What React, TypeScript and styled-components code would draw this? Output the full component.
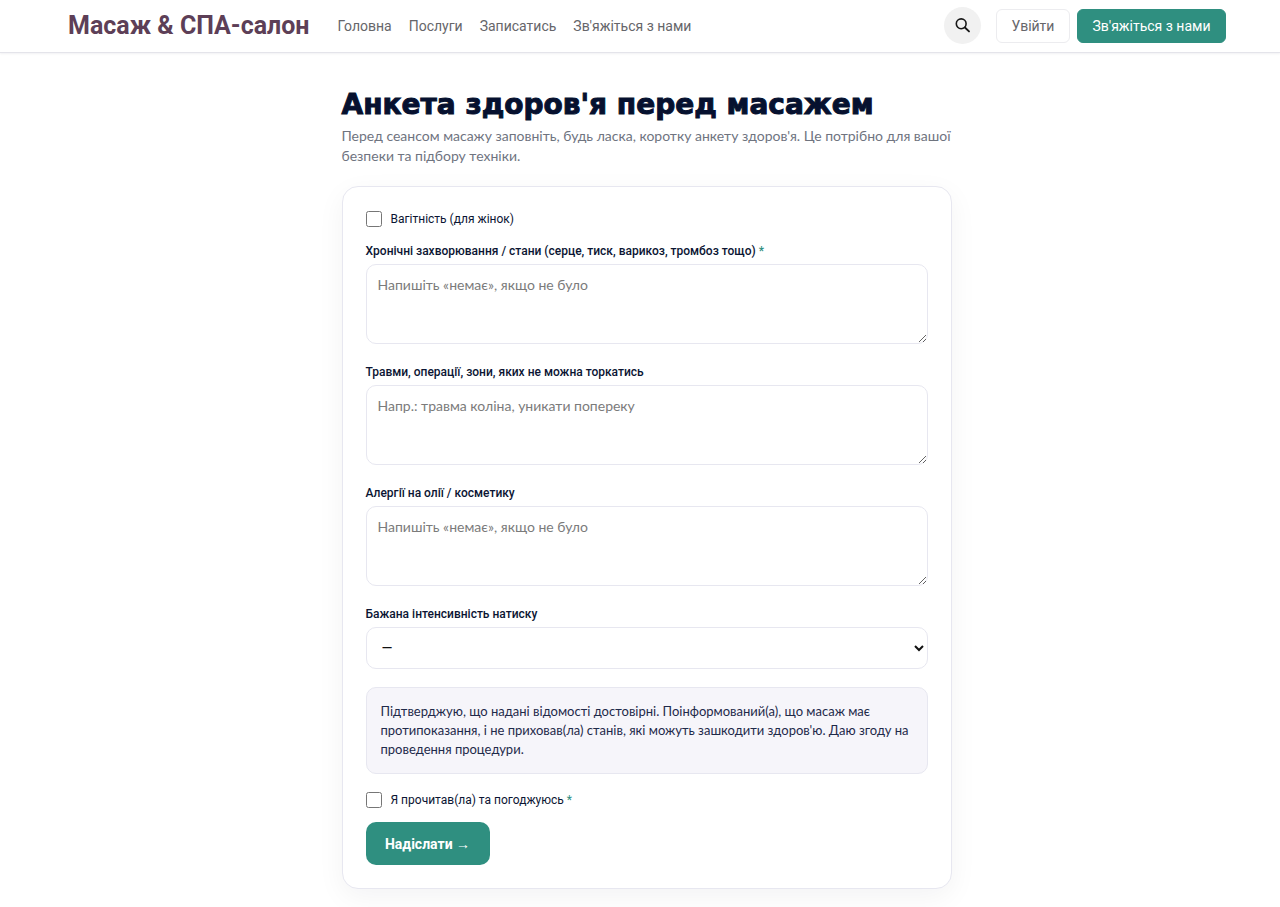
import React from "react";
import styled, { createGlobalStyle } from "styled-components";

const GlobalStyle = createGlobalStyle`
  *, *::before, *::after { box-sizing: border-box; }
  body {
    margin: 0;
    background: #fff;
    color: #0b1533;
    font-family: Roboto, "Noto Sans", sans-serif;
    font-size: 14px;
    line-height: 20px;
  }
  button, input, textarea, select { font: inherit; }
`;

const Header = styled.header`
  display: flex;
  align-items: center;
  min-height: 53px;
  padding: 0 54px 1px 68px;
  border-bottom: 1px solid #e4e4ea;
  box-shadow: 0 1px 2px rgba(20, 20, 50, 0.06);
`;

const Brand = styled.a`
  margin-right: 28px;
  color: #5d3f57;
  font-size: 25px;
  line-height: 32px;
  font-weight: 700;
  text-decoration: none;
  white-space: nowrap;
`;

const Nav = styled.nav`
  display: flex;
  flex: 1;
  gap: 17px;
`;

const NavLink = styled.a`
  color: #66666a;
  text-decoration: none;
  white-space: nowrap;
`;

const Actions = styled.div`
  display: flex;
  align-items: center;
`;

const SearchButton = styled.button`
  display: grid;
  place-items: center;
  width: 37px;
  height: 37px;
  margin-right: 15px;
  padding: 0;
  border: 0;
  border-radius: 50%;
  background: #f1f1f1;
  color: #181818;
`;

const HeaderButton = styled.button<{ $primary?: boolean }>`
  height: 34px;
  min-width: ${(p) => (p.$primary ? 149 : 74)}px;
  margin-left: ${(p) => (p.$primary ? 7 : 0)}px;
  padding: 0 12px;
  border: 1px solid ${(p) => (p.$primary ? "#2f8f80" : "#ececef")};
  border-radius: 6px;
  background: ${(p) => (p.$primary ? "#2f8f80" : "#fff")};
  color: ${(p) => (p.$primary ? "#fff" : "#66666a")};
  white-space: nowrap;
`;

const Main = styled.main`
  max-width: 623px;
  margin: 0 auto;
  padding: 34px 0 19px 13px;
  width: 100%;
`;

const Title = styled.h1`
  margin: 0;
  color: #06112f;
  font-family: "DejaVu Sans", sans-serif;
  font-size: 28px;
  line-height: 36px;
  font-weight: 700;
  -webkit-text-stroke: 1px #06112f;
`;

const Lead = styled.p`
  margin: 3px 0 20px;
  color: #6f747f;
  font-family: Lato, "Noto Sans", sans-serif;
`;

const Card = styled.form`
  padding: 24px 23px 23px;
  border: 1px solid #e7e7f0;
  border-radius: 16px;
  background: #fff;
  box-shadow: 0 8px 28px rgba(20, 20, 40, 0.05);
`;

const CheckRow = styled.label`
  display: flex;
  align-items: center;
  gap: 9px;
  margin-bottom: 14px;
  font-size: 12px;
  line-height: 16px;
  font-weight: 400;
`;

const Checkbox = styled.input`
  width: 16px;
  height: 16px;
  margin: 0;
`;

const Required = styled.span`
  color: #2f8f80;
`;

const Field = styled.div`
  display: flex;
  flex-direction: column;
  gap: 5px;
  margin-bottom: 18px;
`;

const Label = styled.label`
  padding-top: 2px;
  font-size: 12px;
  line-height: 16px;
  font-weight: 500;
`;

const TextArea = styled.textarea`
  display: block;
  width: 100%;
  height: 80px;
  padding: 10px 11px;
  border: 1px solid #e7e7f0;
  border-radius: 10px;
  background: #fff;
  color: #0b1533;
  font-family: Lato, "Noto Sans", sans-serif;
  resize: vertical;
  &::placeholder { color: #7b7b7b; }
`;

const Select = styled.select`
  width: 100%;
  height: 42px;
  padding: 0 11px;
  border: 1px solid #e7e7f0;
  border-radius: 10px;
  background: #fff;
  color: #111;
`;

const Notice = styled.p`
  margin: 0 0 18px;
  padding: 14px;
  border: 1px solid #e7e7f0;
  border-radius: 10px;
  background: #f6f5fa;
  color: #1f2a4a;
  font-family: Lato, "Noto Sans", sans-serif;
  font-size: 13px;
  line-height: 19px;
`;

const SubmitButton = styled.button`
  display: block;
  min-width: 124px;
  height: 43px;
  padding: 0 19px;
  border: 0;
  border-radius: 10px;
  background: #2f8f80;
  color: #fff;
  font-weight: 700;
`;

const links = ["Головна", "Послуги", "Записатись", "Зв'яжіться з нами"];

const questions = [
  {
    id: "conditions",
    label: "Хронічні захворювання / стани (серце, тиск, варикоз, тромбоз тощо)",
    placeholder: "Напишіть «немає», якщо не було",
    required: true,
  },
  {
    id: "injuries",
    label: "Травми, операції, зони, яких не можна торкатись",
    placeholder: "Напр.: травма коліна, уникати попереку",
  },
  {
    id: "allergies",
    label: "Алергії на олії / косметику",
    placeholder: "Напишіть «немає», якщо не було",
  },
];

export default function App() {
  return (
    <>
      <GlobalStyle />
      <Header>
        <Brand href="#">Масаж &amp; СПА-салон</Brand>
        <Nav>
          {links.map((text) => (
            <NavLink key={text} href="#">{text}</NavLink>
          ))}
        </Nav>
        <Actions>
          <SearchButton type="button" aria-label="Пошук">
            <svg width="16" height="16" viewBox="0 0 16 16" fill="none" stroke="currentColor" strokeWidth="1.6" strokeLinecap="round">
              <circle cx="6.2" cy="5.8" r="4.9" />
              <path d="M9.9 9.5 14 13.4" strokeWidth="1.9" />
            </svg>
          </SearchButton>
          <HeaderButton type="button">Увійти</HeaderButton>
          <HeaderButton type="button" $primary>Зв'яжіться з нами</HeaderButton>
        </Actions>
      </Header>
      <Main>
        <Title>Анкета здоров'я перед масажем</Title>
        <Lead>
          Перед сеансом масажу заповніть, будь ласка, коротку анкету здоров'я. Це потрібно для вашої безпеки та підбору техніки.
        </Lead>
        <Card>
          <CheckRow>
            <Checkbox type="checkbox" />
            <span>Вагітність (для жінок)</span>
          </CheckRow>
          {questions.map((q) => (
            <Field key={q.id}>
              <Label htmlFor={q.id}>
                {q.label}
                {q.required && <Required> *</Required>}
              </Label>
              <TextArea id={q.id} placeholder={q.placeholder} />
            </Field>
          ))}
          <Field>
            <Label htmlFor="pressure">Бажана інтенсивність натиску</Label>
            <Select id="pressure">
              <option>—</option>
            </Select>
          </Field>
          <Notice>
            Підтверджую, що надані відомості достовірні. Поінформований(а), що масаж має протипоказання, і не приховав(ла) станів, які можуть зашкодити здоров'ю. Даю згоду на проведення процедури.
          </Notice>
          <CheckRow>
            <Checkbox type="checkbox" />
            <span>Я прочитав(ла) та погоджуюсь <Required>*</Required></span>
          </CheckRow>
          <SubmitButton type="button">Надіслати →</SubmitButton>
        </Card>
      </Main>
    </>
  );
}
